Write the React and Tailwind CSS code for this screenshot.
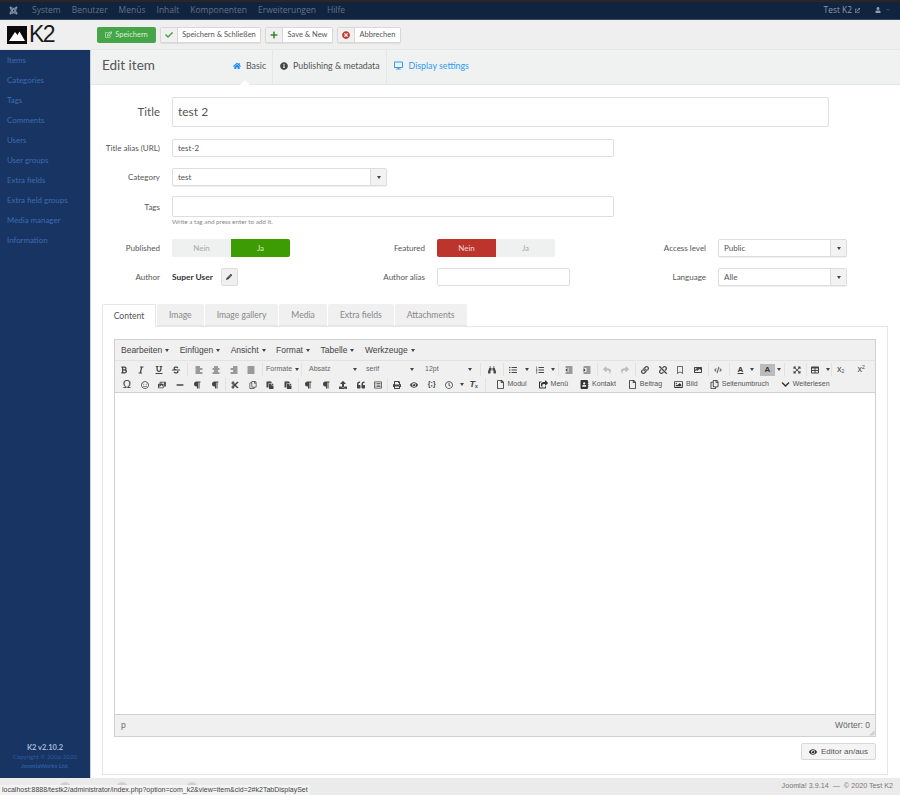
import {
  FaJoomla, FaUser, FaExternalLinkAlt, FaRegEdit, FaCheck, FaPlus, FaTimesCircle, FaHome, FaInfoCircle, FaDesktop,
  FaPencilAlt, FaBold, FaItalic, FaUnderline, FaStrikethrough, FaAlignLeft, FaAlignCenter, FaAlignRight, FaAlignJustify,
  FaBinoculars, FaListUl, FaListOl, FaOutdent, FaIndent, FaReply, FaShare, FaLink, FaUnlink, FaRegBookmark, FaImage, FaCode,
  FaExpandArrowsAlt, FaTable, FaRegSmile, FaPhotoVideo, FaMinus, FaParagraph, FaCut, FaRegCopy,
  FaPaste, FaQuoteLeft, FaRegListAlt, FaPrint, FaEye, FaRegClock, FaRegFile, FaShareSquare, FaAddressBook,
  FaRegImage, FaChevronDown, FaUpload,
} from 'react-icons/fa';

const navItems = ['System', 'Benutzer', 'Menüs', 'Inhalt', 'Komponenten', 'Erweiterungen', 'Hilfe'];
const sideItems = ['Items', 'Categories', 'Tags', 'Comments', 'Users', 'User groups', 'Extra fields', 'Extra field groups', 'Media manager', 'Information'];
const menuItems = ['Bearbeiten', 'Einfügen', 'Ansicht', 'Format', 'Tabelle', 'Werkzeuge'];
const tabs = ['Image', 'Image gallery', 'Media', 'Extra fields', 'Attachments'];

const Caret = () => <span className="inline-block w-0 h-0 border-x-[2.5px] border-x-transparent border-t-[3px] border-t-[#444]" />;

const ToolBtn = ({ icon: Icon, className = 'text-[#444]' }) => (
  <span className={`flex items-center justify-center w-[17.5px] h-[13px] text-[8px] shrink-0 ${className}`}>
    <Icon />
  </span>
);

const Arrow = ({ className = 'w-[6px]' }) => <span className={`flex items-center justify-center h-[13px] shrink-0 ml-px ${className}`}><Caret /></span>;
const Sep = ({ className = 'mx-[2px]' }) => <span className={`w-px h-[13px] bg-[#e2e2e2] shrink-0 ${className}`} />;

const LabelBtn = ({ icon: Icon, children }) => (
  <span className="flex items-center gap-[3px] text-[7px] text-[#555] shrink-0">
    <Icon className="text-[9px] text-[#333]" />
    {children}
  </span>
);

const Select = ({ value, className }) => (
  <div className={`flex h-[18px] bg-white border border-[#ddd] rounded-[2px] shadow-[0_1px_1px_#eee] ${className}`}>
    <span className="flex-1 pl-[5px] text-[8px] leading-[16px] text-[#555]">{value}</span>
    <span className="flex items-center justify-center w-4 bg-[#f2f2f2] border-l border-[#ddd]"><Caret /></span>
  </div>
);

const Label = ({ children, className = '' }) => (
  <label className={`text-right text-[8px] text-[#555] ${className}`}>{children}</label>
);

const Toggle = ({ active }) => (
  <div className="flex h-[18px] w-[118px] rounded-[2px] overflow-hidden text-[8px] leading-[18px] text-center text-[#aaa] bg-[#eff0f0]">
    <span className={`w-[59px] ${active === 'no' ? 'bg-[#bd342c] text-[#eedbd9]' : ''}`}>Nein</span>
    <span className={`w-[59px] ${active === 'yes' ? 'bg-[#3d9c03] text-[#d5ebc5]' : ''}`}>Ja</span>
  </div>
);

const ActionBtn = ({ icon: Icon, iconClass, className, children }) => (
  <button className={`flex items-center h-[16px] bg-white border border-[#d8d8d8] rounded-[2px] text-[7.5px] text-[#555] shadow-[0_1px_1px_#ddd] ${className}`}>
    <span className={`flex items-center justify-center w-[17px] h-full shrink-0 bg-[#f0f0f0] border-r border-[#d8d8d8] text-[8px] ${iconClass}`}><Icon /></span>
    <span className="flex-1 text-center whitespace-nowrap">{children}</span>
  </button>
);

export default function App() {
  return (
    <div className="flex flex-col h-[795px] w-[900px] overflow-hidden relative bg-white font-['Lato',sans-serif]">
      <div className="h-[2px] bg-[#2b2622]" />
      <div className="flex items-center h-[18px] bg-[#10233f] border-b border-[#3b4a63] text-[#62738a]">
        <FaJoomla className="ml-[9px] mr-[14px] text-[9px] text-[#8b98aa]" />
        <div className="flex gap-[11px] font-['Open_Sans',sans-serif] text-[8.5px]">
          {navItems.map(item => <span key={item}>{item}</span>)}
        </div>
        <div className="ml-auto flex items-center text-[#8f9bae] font-['Open_Sans',sans-serif] text-[8.4px]">
          <span>Test K2</span>
          <FaExternalLinkAlt className="ml-[3px] text-[5px]" />
          <FaUser className="ml-[15px] text-[6px]" />
          <span className="ml-[5px] mr-[10px] w-0 h-0 border-x-[2px] border-x-transparent border-t-[2px] border-t-[#33445f]" />
        </div>
      </div>

      <div className="flex items-center h-[30px] bg-[#efefef] border-b border-[#e6e6e6]">
        <div className="flex items-center w-[97px] pl-[7px]">
          <svg width="20" height="18" viewBox="0 0 20 18">
            <rect width="20" height="18" fill="#0b0b0b" />
            <path d="M2 15 L8 6 L10.5 9 L12.5 5.5 L18 15 Z" fill="#fff" />
          </svg>
          <span className="ml-[2px] text-[23px] leading-[25px] text-[#1a1a1a] font-['Liberation_Sans',sans-serif] tracking-[-1.5px]">K2</span>
        </div>
        <div className="flex items-center gap-[4px]">
          <button className="flex items-center justify-center gap-[3px] w-[59px] h-[16px] bg-[#46a546] rounded-[2px] text-[7.5px] text-[#d8eed8]">
            <FaRegEdit className="text-[7px]" />Speichern
          </button>
          <ActionBtn icon={FaCheck} iconClass="text-[#46a546]" className="w-[101px]">Speichern &amp; Schließen</ActionBtn>
          <ActionBtn icon={FaPlus} iconClass="text-[#378137]" className="w-[68px]">Save &amp; New</ActionBtn>
          <ActionBtn icon={FaTimesCircle} iconClass="text-[#bd362f]" className="w-[64px]">Abbrechen</ActionBtn>
        </div>
      </div>

      <div className="flex flex-1 min-h-0">
        <aside className="flex flex-col w-[91px] shrink-0 bg-[#173463] border-r border-[#c8d0e0]">
          <ul className="text-[7.9px] text-[#3c6cb0]">
            {sideItems.map(item => <li key={item} className="h-[20px] pl-[7px] leading-[20px]">{item}</li>)}
          </ul>
          <div className="mt-auto pb-[8px] text-center text-[6px] leading-[8.5px] text-[#2f5d9f]">
            <div className="text-[7.5px] leading-[10px] font-bold text-[#a9bbd6]">K2 v2.10.2</div>
            <div>Copyright © 2006-2020</div>
            <div className="font-bold">JoomlaWorks Ltd.</div>
          </div>
        </aside>

        <main className="flex-1 min-w-0 flex flex-col">
          <div className="flex h-[35px] bg-[#f0f1f1] border-b border-[#e6e6e6] shrink-0 relative">
            <h1 className="w-[142px] pl-[11px] text-[13.5px] leading-[30px] text-[#555]">Edit item</h1>
            <div className="flex items-stretch text-[8.8px]">
              <span className="flex items-center gap-[5px] pb-[3px] pr-[6px] border-r border-[#e6e6e6] text-[#555]"><FaHome className="text-[#1a8cff] text-[8px]" />Basic</span>
              <span className="flex items-center gap-[5px] pb-[3px] pl-[7px] pr-[6px] border-r border-[#e6e6e6] text-[#555]"><FaInfoCircle className="text-[#444] text-[8px]" />Publishing &amp; metadata</span>
              <span className="flex items-center gap-[6px] pb-[3px] px-[7px] text-[#2a9df4]"><FaDesktop className="text-[9px]" />Display settings</span>
            </div>
            <span className="absolute left-[149px] bottom-[-1px] w-0 h-0 border-x-[5px] border-x-transparent border-b-[5px] border-b-white" />
          </div>

          <div className="flex-1 min-h-0 pl-[11px] pr-[12px] pt-[12px]">
            <div className="flex items-center h-[30px]">
              <Label className="w-[58px] text-[11.5px]">Title</Label>
              <div className="ml-[12px] w-[657px] h-full border border-[#e0e0e0] rounded-[2px] pl-[5px] text-[12px] leading-[28px] text-[#555]">test 2</div>
            </div>
            <div className="flex items-center h-[18px] mt-[12px]">
              <Label className="w-[58px] whitespace-nowrap">Title alias (URL)</Label>
              <div className="ml-[12px] w-[442px] h-full border border-[#ddd] rounded-[2px] pl-[5px] text-[8px] leading-[16px] text-[#555]">test-2</div>
            </div>
            <div className="flex items-center h-[18px] mt-[11px]">
              <Label className="w-[58px]">Category</Label>
              <Select value="test" className="ml-[12px] w-[215px]" />
            </div>
            <div className="flex items-center h-[21px] mt-[10px]">
              <Label className="w-[58px]">Tags</Label>
              <div className="ml-[12px] w-[442px] h-full border border-[#ddd] rounded-[2px]" />
            </div>
            <p className="ml-[70px] text-[6.3px] leading-[9px] text-[#888]">Write a tag and press enter to add it.</p>

            <div className="grid grid-cols-[58px_176px_65px_191px_66px_129px] gap-x-[12px] gap-y-[11px] items-center mt-[13px]">
              <Label>Published</Label>
              <Toggle active="yes" />
              <Label>Featured</Label>
              <Toggle active="no" />
              <Label>Access level</Label>
              <Select value="Public" />

              <Label>Author</Label>
              <div className="flex items-center gap-[8px] text-[8.4px] font-bold text-[#333]">
                Super User
                <span className="flex items-center justify-center w-[17px] h-[18px] bg-[#f0f0f0] border border-[#ddd] rounded-[2px] text-[6px] text-[#333]"><FaPencilAlt /></span>
              </div>
              <Label>Author alias</Label>
              <div className="w-[133px] h-[18px] border border-[#ddd] rounded-[2px]" />
              <Label>Language</Label>
              <Select value="Alle" />
            </div>

            <div className="flex mt-[18px] h-[22px] text-[8.6px] text-[#888] relative z-10">
              <span className="w-[54px] h-[23px] leading-[22px] text-center bg-white text-[#555] border border-b-0 border-[#e6e6e6] rounded-t-[2px]">Content</span>
              {tabs.map(tab => (
                <span key={tab} className="px-[12px] ml-px leading-[22px] bg-[#f0f0f0] border-b border-[#e6e6e6] rounded-t-[2px]">{tab}</span>
              ))}
            </div>

            <div className="h-[449px] border border-[#e6e6e6] px-[11px] pt-[12px] font-['Liberation_Sans',sans-serif]">
              <div className="flex flex-col h-[398px] border border-[#d0d0d0]">
                <div className="flex items-center gap-[10.5px] h-[21px] bg-[#f0f0f0] border-b border-[#e2e2e2] pl-[6px] text-[8.5px] text-[#444]">
                  {menuItems.map(item => <span key={item} className="flex items-center gap-[3px]">{item}<Caret /></span>)}
                </div>
                <div className="h-[32px] bg-[#f0f0f0] border-b border-[#d0d0d0] pt-[1px]">
                  <div className="flex items-center h-[15px]">
                    <ToolBtn icon={FaBold} /><ToolBtn icon={FaItalic} /><ToolBtn icon={FaUnderline} /><ToolBtn icon={FaStrikethrough} />
                    <Sep />
                    <ToolBtn icon={FaAlignLeft} /><ToolBtn icon={FaAlignCenter} /><ToolBtn icon={FaAlignRight} /><ToolBtn icon={FaAlignJustify} />
                    <Sep />
                    <span className="flex items-center justify-between w-[33px] text-[7px] text-[#666] shrink-0 ml-px">Formate<Caret /></span>
                    <Sep />
                    <span className="flex items-center justify-between w-[48px] text-[7px] text-[#666] shrink-0 ml-[5px]">Absatz<Caret /></span>
                    <span className="flex items-center justify-between w-[48px] text-[7px] text-[#666] shrink-0 ml-[9px]">serif<Caret /></span>
                    <span className="flex items-center justify-between w-[47px] text-[7px] text-[#666] shrink-0 ml-[11px]">12pt<Caret /></span>
                    <Sep className="ml-[8px] mr-[2px]" />
                    <ToolBtn icon={FaBinoculars} />
                    <Sep className="ml-[2px] mr-px" />
                    <ToolBtn icon={FaListUl} /><Arrow className="w-[8px]" /><ToolBtn icon={FaListOl} /><Arrow />
                    <Sep />
                    <ToolBtn icon={FaOutdent} /><ToolBtn icon={FaIndent} />
                    <Sep className="mx-px" />
                    <ToolBtn icon={FaReply} className="text-[#bbb]" /><ToolBtn icon={FaShare} className="text-[#bbb]" />
                    <Sep className="mx-px" />
                    <ToolBtn icon={FaLink} /><ToolBtn icon={FaUnlink} /><ToolBtn icon={FaRegBookmark} /><ToolBtn icon={FaImage} />
                    <Sep className="mx-px" />
                    <ToolBtn icon={FaCode} className="text-[#666]" />
                    <Sep className="ml-[2px] mr-[3px]" />
                    <span className="w-[15px] text-center text-[8px] font-bold text-[#333] underline shrink-0">A</span><Arrow />
                    <span className="w-[15px] text-center text-[8px] font-bold text-[#333] bg-[#bbb] shrink-0 ml-[5px]">A</span><Arrow />
                    <Sep className="ml-[2px] mr-[3px]" />
                    <ToolBtn icon={FaExpandArrowsAlt} />
                    <Sep className="mx-0" />
                    <ToolBtn icon={FaTable} /><Arrow />
                    <Sep className="mx-0" />
                    <span className="w-[17.5px] text-center text-[9px] text-[#444] shrink-0">x<sub className="text-[5px]">2</sub></span>
                    <span className="w-[17.5px] text-center text-[9px] text-[#444] shrink-0 ml-[3px]">x<sup className="text-[5px]">2</sup></span>
                  </div>
                  <div className="flex items-center h-[15px]">
                    <span className="w-[21px] text-right pr-[5px] text-[11px] leading-[13px] text-[#333] shrink-0">Ω</span>
                    <ToolBtn icon={FaRegSmile} /><ToolBtn icon={FaPhotoVideo} /><ToolBtn icon={FaMinus} /><ToolBtn icon={FaParagraph} /><ToolBtn icon={FaParagraph} />
                    <Sep className="mx-px" />
                    <ToolBtn icon={FaCut} /><ToolBtn icon={FaRegCopy} /><ToolBtn icon={FaPaste} /><ToolBtn icon={FaPaste} />
                    <Sep className="mx-px" />
                    <ToolBtn icon={FaParagraph} /><ToolBtn icon={FaParagraph} /><ToolBtn icon={FaUpload} /><ToolBtn icon={FaQuoteLeft} /><ToolBtn icon={FaRegListAlt} />
                    <Sep className="mx-0" />
                    <ToolBtn icon={FaPrint} /><ToolBtn icon={FaEye} />
                    <span className="w-[17.5px] text-center text-[7px] font-bold text-[#444] shrink-0">{'{;}'}</span>
                    <ToolBtn icon={FaRegClock} /><Arrow />
                    <span className="w-[17.5px] text-center text-[9px] italic font-bold text-[#444] shrink-0">T<sub className="text-[5px] not-italic">x</sub></span>
                    <Sep />
                    <div className="flex items-center gap-[12px] ml-[8px]">
                      <LabelBtn icon={FaRegFile}>Modul</LabelBtn>
                      <LabelBtn icon={FaShareSquare}>Menü</LabelBtn>
                      <LabelBtn icon={FaAddressBook}>Kontakt</LabelBtn>
                      <LabelBtn icon={FaRegFile}>Beitrag</LabelBtn>
                      <LabelBtn icon={FaRegImage}>Bild</LabelBtn>
                      <LabelBtn icon={FaRegCopy}>Seitenumbruch</LabelBtn>
                      <LabelBtn icon={FaChevronDown}>Weiterlesen</LabelBtn>
                    </div>
                  </div>
                </div>
                <div className="flex-1" />
                <div className="relative flex items-center justify-between h-[22px] bg-[#f0f0f0] border-t border-[#d0d0d0] pl-[6px] pr-[5px] text-[8.5px] text-[#666]">
                  <span>p</span>
                  <span>Wörter: 0</span>
                  <svg className="absolute right-0 bottom-0" width="6" height="6" viewBox="0 0 6 6">
                    <path d="M5.5 1 L1 5.5 M5.5 3 L3 5.5" stroke="#999" strokeWidth="0.7" fill="none" />
                  </svg>
                </div>
              </div>
              <div className="flex justify-end mt-[6px]">
                <button className="flex items-center justify-center gap-[4px] w-[75px] h-[17px] bg-[#f4f4f4] border border-[#d8d8d8] rounded-[2px] text-[8px] text-[#555]">
                  <FaEye className="text-[8px] text-[#333]" />Editor an/aus
                </button>
              </div>
            </div>
          </div>
        </main>
      </div>

      <footer className="relative flex items-center justify-end h-[17px] shrink-0 bg-[#ebebeb] pr-[7px] text-[7.2px] text-[#777] font-['Liberation_Sans',sans-serif]">
        {/* tops of the round footer icons, the rest is behind the url tooltip */}
        <span className="absolute left-[59px] top-[4px] w-[12px] h-[12px] rounded-full bg-[#d0d0d0]" />
        <span className="absolute left-[116px] top-[4px] w-[12px] h-[12px] rounded-full bg-[#d0d0d0]" />
        <span className="absolute left-[186px] top-[4px] w-[12px] h-[12px] rounded-full bg-[#d0d0d0]" />
        Joomla! 3.9.14 &nbsp;—&nbsp; © 2020 Test K2
      </footer>
      <div className="absolute left-0 bottom-0 h-[10px] px-[2px] bg-[#f3f3f3] rounded-tr-[2px] text-[7px] leading-[10px] text-[#444] font-['Liberation_Sans',sans-serif]">
        localhost:8888/testk2/administrator/index.php?option=com_k2&amp;view=item&amp;cid=2#k2TabDisplaySet
      </div>
    </div>
  );
}
